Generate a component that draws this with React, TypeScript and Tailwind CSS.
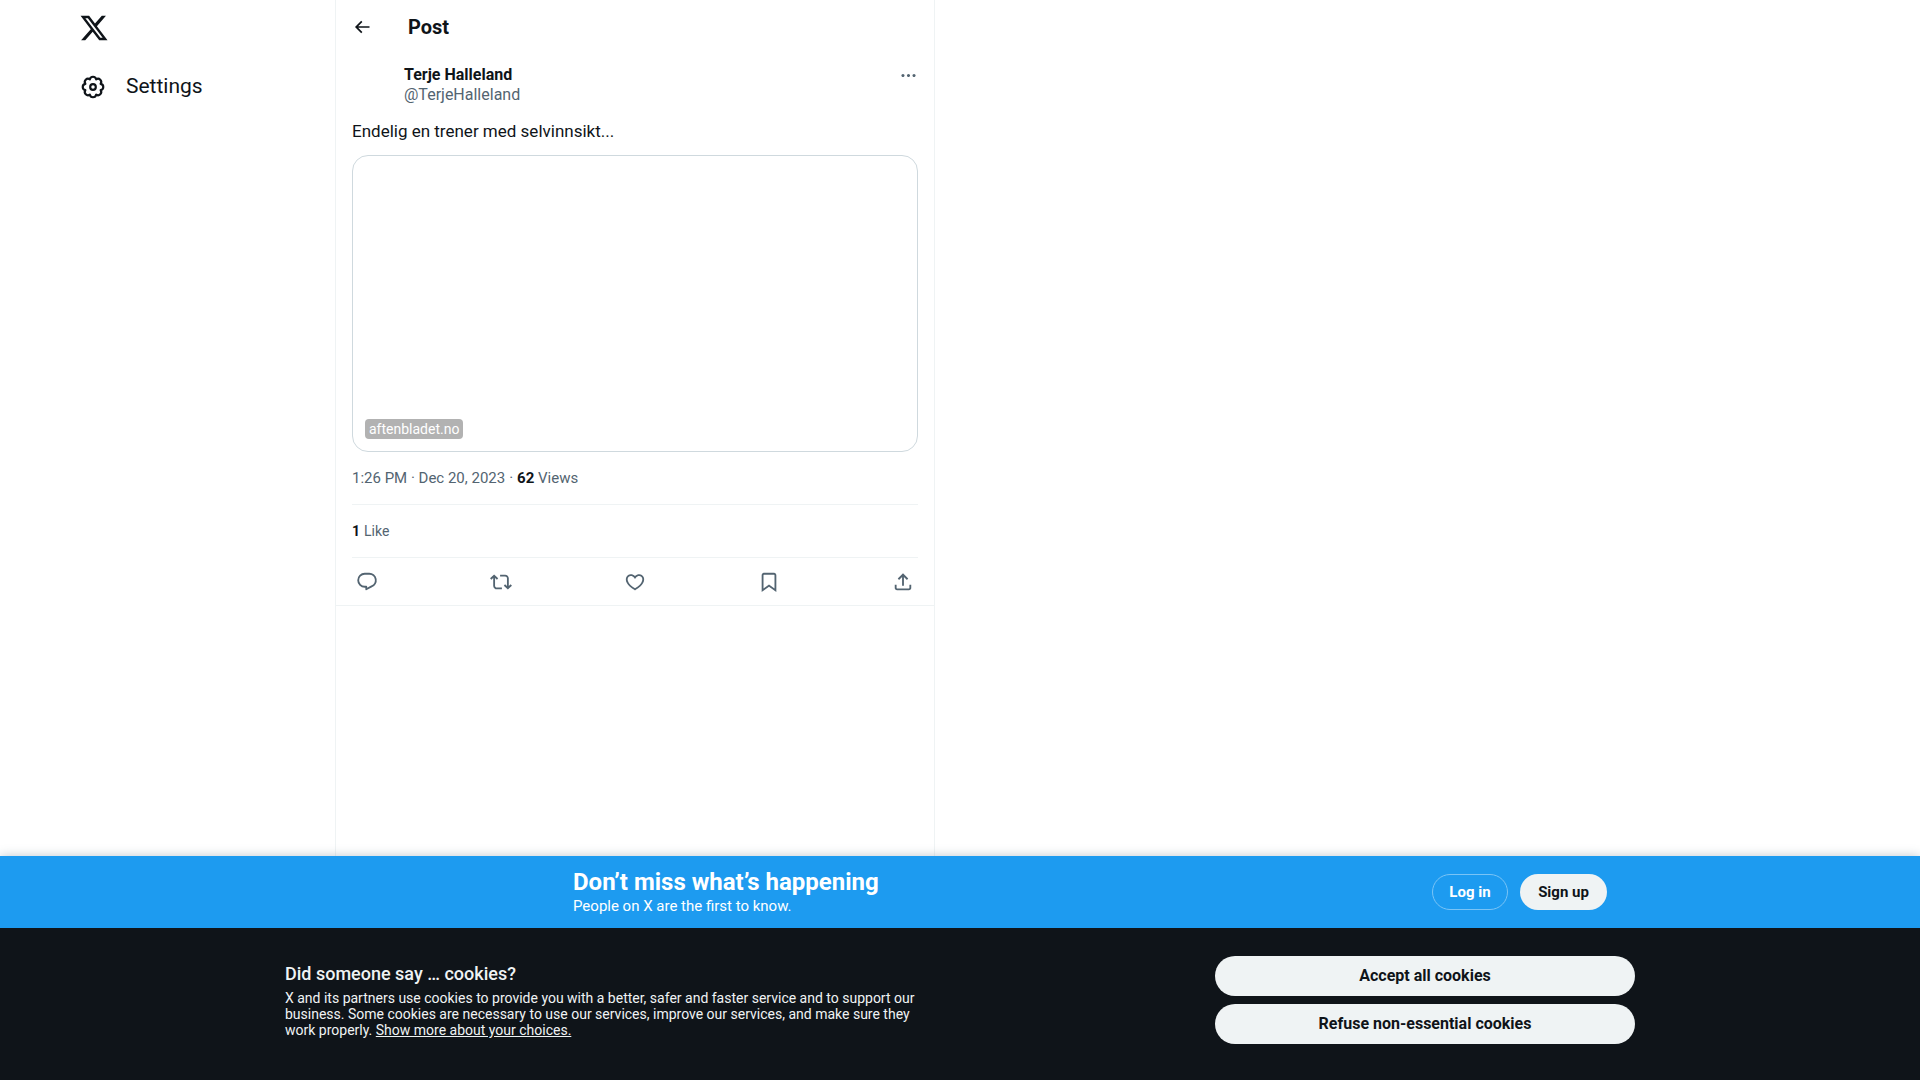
import React from "react";

const icons = {
  logo: "M18.244 2.25h3.308l-7.227 8.26 8.502 11.24H16.17l-5.214-6.817L4.99 21.75H1.68l7.73-8.835L1.254 2.25H8.08l4.713 6.231zm-1.161 17.52h1.833L7.084 4.126H5.117z",
  settings:
    "M9.09 4.98a2.95 2.95 0 0 1 5.82 0a2.95 2.95 0 0 1 4.11 4.11a2.95 2.95 0 0 1 0 5.82a2.95 2.95 0 0 1-4.11 4.11a2.95 2.95 0 0 1-5.82 0a2.95 2.95 0 0 1-4.11-4.11a2.95 2.95 0 0 1 0-5.82a2.95 2.95 0 0 1 4.11-4.11zM12 9.4a2.6 2.6 0 1 0 0 5.2a2.6 2.6 0 1 0 0-5.2z",
  back: "M7.414 13l5.043 5.04-1.414 1.42L3.586 12l7.457-7.46 1.414 1.42L7.414 11H21v2H7.414z",
  more: "M3 12c0-1.1.9-2 2-2s2 .9 2 2-.9 2-2 2-2-.9-2-2zm9 2c1.1 0 2-.9 2-2s-.9-2-2-2-2 .9-2 2 .9 2 2 2zm7 0c1.1 0 2-.9 2-2s-.9-2-2-2-2 .9-2 2 .9 2 2 2z",
  reply: "M9.5 3h5a7.1 7.1 0 0 1 2.5 13.75L11.2 19.9v-2.7H9.5a7.1 7.1 0 0 1 0-14.2z",
  repost:
    "M4.5 3.88l4.432 4.14-1.364 1.46L5.5 7.55V16c0 1.1.896 2 2 2H13v2H7.5c-2.209 0-4-1.79-4-4V7.55L1.432 9.48.068 8.02 4.5 3.88zM16.5 6H11V4h5.5c2.209 0 4 1.79 4 4v8.45l2.068-1.93 1.364 1.46-4.432 4.14-4.432-4.14 1.364-1.46 2.068 1.93V8c0-1.1-.896-2-2-2z",
  like: "M16.697 5.5c-1.222-.06-2.679.51-3.89 2.16l-.805 1.09-.806-1.09C9.984 6.01 8.526 5.44 7.304 5.5c-1.243.07-2.349.78-2.91 1.91-.552 1.12-.633 2.78.479 4.82 1.074 1.97 3.257 4.27 7.129 6.61 3.87-2.34 6.052-4.64 7.126-6.61 1.111-2.04 1.03-3.7.477-4.82-.561-1.13-1.666-1.84-2.908-1.91zm4.187 7.69c-1.351 2.48-4.001 5.12-8.379 7.67l-.503.3-.504-.3c-4.379-2.55-7.029-5.19-8.382-7.67-1.36-2.5-1.41-4.86-.514-6.67.887-1.79 2.647-2.91 4.601-3.01 1.651-.09 3.368.56 4.798 2.01 1.429-1.45 3.146-2.1 4.796-2.01 1.954.1 3.714 1.22 4.601 3.01.896 1.81.846 4.17-.514 6.67z",
  bookmark:
    "M4 4.5C4 3.12 5.119 2 6.5 2h11C18.881 2 20 3.12 20 4.5v18.44l-8-5.71-8 5.71V4.5zM6.5 4c-.276 0-.5.22-.5.5v14.56l6-4.29 6 4.29V4.5c0-.28-.224-.5-.5-.5h-11z",
  share:
    "M12 2.59l5.7 5.7-1.41 1.42L13 6.41V16h-2V6.41l-3.3 3.3-1.41-1.42L12 2.59zM21 15l-.02 3.51c0 1.38-1.12 2.49-2.5 2.49H5.5C4.11 21 3 19.88 3 18.5V15h2v3.5c0 .28.22.5.5.5h12.98c.28 0 .5-.22.5-.5L19 15h2z",
};

interface IconProps {
  name: keyof typeof icons;
  className: string;
}

// settings and reply are outlines, the rest are filled shapes
const Icon = ({ name, className }: IconProps) => {
  const outlined = name === "settings" || name === "reply";

  return (
    <svg
      viewBox="0 0 24 24"
      aria-hidden="true"
      className={className}
      fill={outlined ? "none" : "currentColor"}
      stroke={outlined ? "currentColor" : "none"}
      strokeWidth={2}
      strokeLinejoin="round"
    >
      <path d={icons[name]} />
    </svg>
  );
};

const actions: { name: keyof typeof icons; label: string }[] = [
  { name: "reply", label: "Reply" },
  { name: "repost", label: "Repost" },
  { name: "like", label: "Like" },
  { name: "bookmark", label: "Bookmark" },
  { name: "share", label: "Share post" },
];

const Sidebar = () => (
  <header className="w-[335px] shrink-0 pl-20">
    <a href="#" aria-label="X" className="flex h-14 items-center">
      <Icon name="logo" className="-ml-px size-[30px]" />
    </a>
    <nav>
      <a href="#" className="flex h-[62px] items-center gap-5 text-[21px]">
        <Icon name="settings" className="size-[26px]" />
        Settings
      </a>
    </nav>
  </header>
);

const Post = () => (
  <article className="border-b border-[#eff3f4] px-4 pt-3">
    <div className="flex h-10 gap-3">
      <div className="size-10 shrink-0 rounded-full" />
      <div className="flex-1 text-base leading-5">
        <a href="#" className="block font-bold">
          Terje Halleland
        </a>
        <a href="#" className="block text-[#536471]">
          @TerjeHalleland
        </a>
      </div>
      <button aria-label="More" className="h-5 text-[#536471]">
        <Icon name="more" className="size-[19px]" />
      </button>
    </div>

    <p className="mt-[14px] text-[17px] leading-6">
      Endelig en trener med selvinnsikt...
    </p>

    <a
      href="#"
      className="mt-3 flex h-[297px] items-end rounded-2xl border border-[#cfd9de] p-3"
    >
      <span className="rounded bg-[#b2b2b2] px-1 text-sm leading-5 text-white">
        aftenbladet.no
      </span>
    </a>

    <div className="flex h-[52px] items-center gap-1 text-[15px] text-[#536471]">
      <a href="#">1:26 PM · Dec 20, 2023</a>
      <span>·</span>
      <span>
        <strong className="font-bold text-[#0f1419]">62</strong> Views
      </span>
    </div>

    <div className="flex h-[53px] items-center gap-1 border-t border-[#eff3f4] text-sm text-[#536471]">
      <strong className="font-bold text-[#0f1419]">1</strong>
      <span>Like</span>
    </div>

    <div className="flex h-12 items-center justify-between border-t border-[#eff3f4] px-1 text-[#536471]">
      {actions.map((action) => (
        <button key={action.name} aria-label={action.label}>
          <Icon name={action.name} className="size-[22px]" />
        </button>
      ))}
    </div>
  </article>
);

const SignupBar = () => (
  <div className="bg-[#1d9bf0] text-white shadow-[0_0_10px_rgba(101,119,134,0.4)]">
    <div className="mx-auto flex h-[72px] max-w-[1350px] items-center justify-between pr-7 pl-72">
      <div>
        <p className="text-2xl leading-7 font-bold">
          Don’t miss what’s happening
        </p>
        <p className="text-[15px] leading-5">
          People on X are the first to know.
        </p>
      </div>
      <div className="flex gap-3 text-[15px] font-bold">
        <button className="h-9 w-[76px] rounded-full border border-[#7ac4f6]">
          Log in
        </button>
        <button className="h-9 w-[87px] rounded-full bg-[#eff3f4] text-[#0f1419]">
          Sign up
        </button>
      </div>
    </div>
  </div>
);

const CookieBanner = () => (
  <div className="relative bg-[#0f1419] text-[#eff3f4]">
    <div className="mx-auto flex h-[152px] max-w-[1350px] items-center justify-between gap-8 pb-2">
      <div className="max-w-[640px]">
        <h2 className="text-lg leading-6 font-medium">
          Did someone say … cookies?
        </h2>
        <p className="mt-1 text-sm leading-4">
          X and its partners use cookies to provide you with a better, safer and
          faster service and to support our business. Some cookies are necessary
          to use our services, improve our services, and make sure they work
          properly.{" "}
          <a href="#" className="underline">
            Show more about your choices.
          </a>
        </p>
      </div>
      <div className="flex w-[420px] shrink-0 flex-col gap-2 text-base font-bold text-[#0f1419]">
        <button className="h-10 rounded-full bg-[#eff3f4]">
          Accept all cookies
        </button>
        <button className="h-10 rounded-full bg-[#eff3f4]">
          Refuse non-essential cookies
        </button>
      </div>
    </div>
  </div>
);

export default function App() {
  return (
    <div className="flex min-h-screen flex-col bg-white font-[Roboto,sans-serif] text-[#0f1419]">
      <div className="flex flex-1">
        <Sidebar />
        <main className="w-[600px] border-x border-[#eff3f4]">
          <div className="flex h-[53px] items-center gap-9 px-4">
            <button aria-label="Back">
              <Icon name="back" className="size-5" />
            </button>
            <h1 className="text-xl font-bold">Post</h1>
          </div>
          <Post />
        </main>
      </div>
      <div className="sticky bottom-0">
        <SignupBar />
        <CookieBanner />
      </div>
    </div>
  );
}
